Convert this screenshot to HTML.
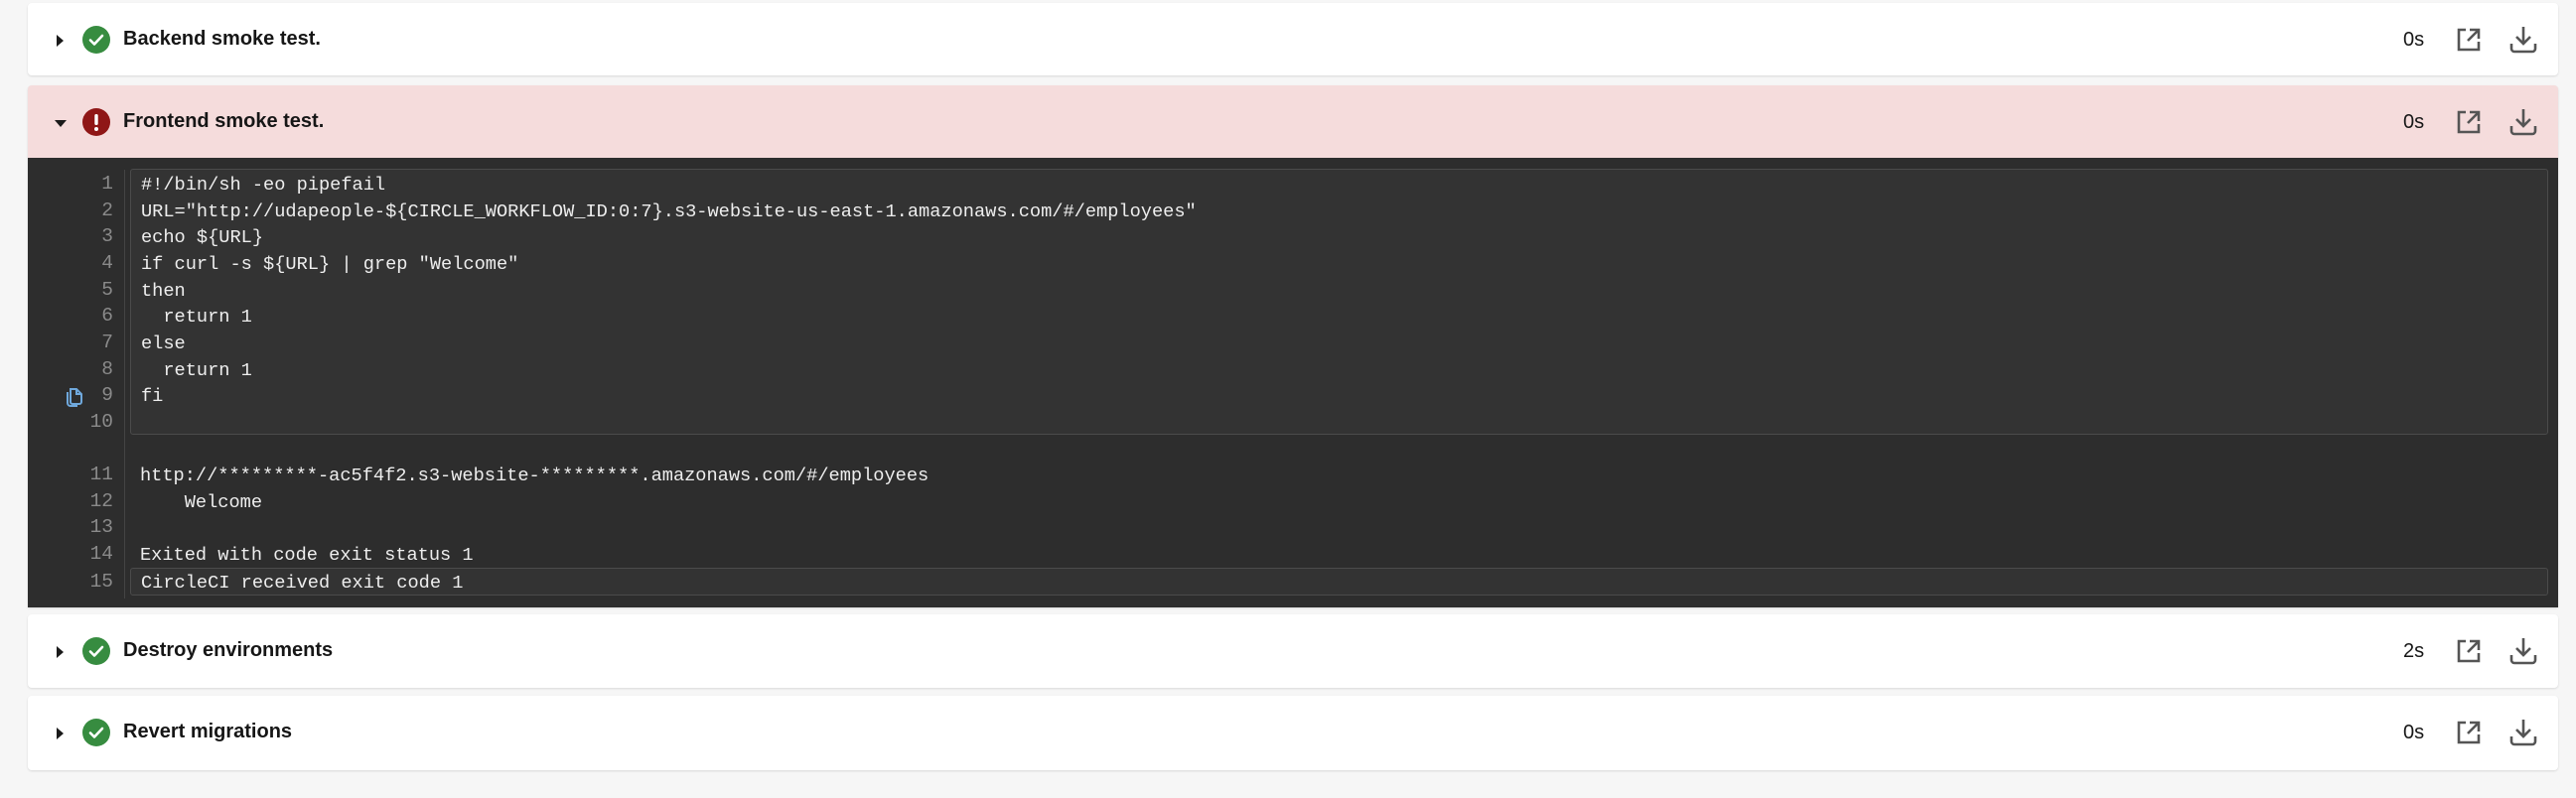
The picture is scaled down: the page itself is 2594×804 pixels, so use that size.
<!DOCTYPE html>
<html><head><meta charset="utf-8"><style>
*{margin:0;padding:0;box-sizing:border-box}
body{width:2594px;height:804px;background:#f6f6f6;font-family:"Liberation Sans",sans-serif;position:relative;overflow:hidden}
.card{position:absolute;left:28px;width:2548px;background:#fff;border-radius:4px;box-shadow:0 1px 2px rgba(0,0,0,.12)}
.chev{position:absolute;left:25px;top:30px}
.ic{position:absolute;left:55px;top:23px;width:28px;height:28px}
.t{position:absolute;left:96px;top:25px;font-size:20px;font-weight:bold;color:#161616}
.dur{position:absolute;left:2392px;top:26px;font-size:20px;color:#161616}
.ext{position:absolute;left:2446px;top:25px}
.dl{position:absolute;left:2499px;top:23px}
.code{position:absolute;left:28px;top:159px;width:2548px;height:453px;background:#2d2d2d}
.box{position:absolute;left:103px;width:2435px;border:1px solid #4b4b4b;border-radius:3px;background:#333}
.sep{position:absolute;left:97px;top:12px;width:1px;height:432px;background:#444}
.ln{position:absolute;left:0;width:86px;text-align:right;font-family:"Liberation Mono",monospace;font-size:19.5px;color:#8a8a8a}
.cl{position:absolute;left:114px;font-family:"Liberation Mono",monospace;font-size:18.65px;color:#eee;white-space:pre}
</style></head><body>

<svg width="0" height="0" style="position:absolute">
<defs>
<symbol id="ok" viewBox="0 0 28 28"><circle cx="14" cy="14" r="14" fill="#378c40"/><path d="M8 14.5l4 4 8-8.5" stroke="#fff" stroke-width="2.6" fill="none" stroke-linecap="round" stroke-linejoin="round"/></symbol>
<symbol id="ext" viewBox="0 0 24 24"><path d="M9 2H2v20h20v-8" stroke="#555" stroke-width="2.6" fill="none"/><path d="M11 13L21 3M13 2h9v9" stroke="#555" stroke-width="2.6" fill="none"/></symbol>
<symbol id="dl" viewBox="0 0 28 28"><path d="M14 1v17M7 11l7 7 7-7" stroke="#555" stroke-width="2.6" fill="none"/><path d="M2 18v5a3 3 0 0 0 3 3h18a3 3 0 0 0 3-3v-5" stroke="#555" stroke-width="2.6" fill="none"/></symbol>
</defs></svg>

<div class="card" style="top:3px;height:73px">
 <svg class="chev" width="16" height="16" viewBox="0 0 16 16"><path d="M4 2l7 6-7 6z" fill="#1a1a1a"/></svg>
 <svg class="ic"><use href="#ok"/></svg>
 <div class="t">Backend smoke test.</div>
 <div class="dur">0s</div>
 <svg class="ext" width="24" height="24"><use href="#ext"/></svg>
 <svg class="dl" width="28" height="28"><use href="#dl"/></svg>
</div>

<div class="card" style="top:86px;height:526px;background:#f5dcdc;border-radius:4px 4px 0 0">
 <svg class="chev" width="16" height="16" viewBox="0 0 16 16"><path d="M2 5h12l-6 7z" fill="#1a1a1a"/></svg>
 <svg class="ic" viewBox="0 0 28 28"><circle cx="14" cy="14" r="14" fill="#8f1616"/><rect x="12.3" y="6" width="3.4" height="11" rx="1.5" fill="#fff"/><circle cx="14" cy="21" r="2" fill="#fff"/></svg>
 <div class="t">Frontend smoke test.</div>
 <div class="dur">0s</div>
 <svg class="ext" width="24" height="24"><use href="#ext"/></svg>
 <svg class="dl" width="28" height="28"><use href="#dl"/></svg>
</div>

<div class="code">
 <div class="box" style="top:11px;height:268px"></div>
 <div class="box" style="top:413px;height:28px"></div>
 <div class="sep"></div>
 <svg style="position:absolute;left:37px;top:229px" width="20" height="22" viewBox="0 0 20 22"><path d="M6 4h6l5 5v8a2 2 0 0 1-2 2H8a2 2 0 0 1-2-2z" stroke="#6fa8dc" stroke-width="2" fill="none"/><path d="M12 4v5h5" stroke="#6fa8dc" stroke-width="2" fill="none"/><path d="M3 7v11a3 3 0 0 0 3 3h7" stroke="#6fa8dc" stroke-width="2" fill="none"/></svg>
 <div class="ln" style="top:15px">1</div><div class="cl" style="top:16px">#!/bin/sh -eo pipefail</div>
 <div class="ln" style="top:42px">2</div><div class="cl" style="top:43px">URL="http://udapeople-${CIRCLE_WORKFLOW_ID:0:7}.s3-website-us-east-1.amazonaws.com/#/employees"</div>
 <div class="ln" style="top:68px">3</div><div class="cl" style="top:69px">echo ${URL}</div>
 <div class="ln" style="top:95px">4</div><div class="cl" style="top:96px">if curl -s ${URL} | grep "Welcome"</div>
 <div class="ln" style="top:122px">5</div><div class="cl" style="top:123px">then</div>
 <div class="ln" style="top:148px">6</div><div class="cl" style="top:149px">  return 1</div>
 <div class="ln" style="top:175px">7</div><div class="cl" style="top:176px">else</div>
 <div class="ln" style="top:202px">8</div><div class="cl" style="top:203px">  return 1</div>
 <div class="ln" style="top:228px">9</div><div class="cl" style="top:229px">fi</div>
 <div class="ln" style="top:255px">10</div>
 <div class="ln" style="top:308px">11</div><div class="cl" style="top:309px;left:113px">http://*********-ac5f4f2.s3-website-*********.amazonaws.com/#/employees</div>
 <div class="ln" style="top:335px">12</div><div class="cl" style="top:336px;left:113px">    Welcome</div>
 <div class="ln" style="top:361px">13</div>
 <div class="ln" style="top:388px">14</div><div class="cl" style="top:389px;left:113px">Exited with code exit status 1</div>
 <div class="ln" style="top:416px">15</div><div class="cl" style="top:417px">CircleCI received exit code 1</div>
</div>

<div class="card" style="top:619px;height:74px">
 <svg class="chev" width="16" height="16" viewBox="0 0 16 16"><path d="M4 2l7 6-7 6z" fill="#1a1a1a"/></svg>
 <svg class="ic"><use href="#ok"/></svg>
 <div class="t">Destroy environments</div>
 <div class="dur">2s</div>
 <svg class="ext" width="24" height="24"><use href="#ext"/></svg>
 <svg class="dl" width="28" height="28"><use href="#dl"/></svg>
</div>

<div class="card" style="top:701px;height:75px">
 <svg class="chev" width="16" height="16" viewBox="0 0 16 16"><path d="M4 2l7 6-7 6z" fill="#1a1a1a"/></svg>
 <svg class="ic"><use href="#ok"/></svg>
 <div class="t">Revert migrations</div>
 <div class="dur">0s</div>
 <svg class="ext" width="24" height="24"><use href="#ext"/></svg>
 <svg class="dl" width="28" height="28"><use href="#dl"/></svg>
</div>
</body></html>
